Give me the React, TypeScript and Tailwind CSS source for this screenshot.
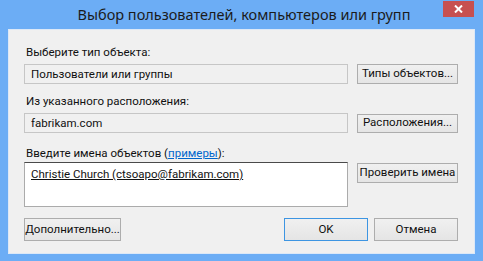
import React from "react";

const titleFont = { fontFamily: '"Noto Sans", "Open Sans", sans-serif' };
const bodyFont = { fontFamily: 'Roboto, "Noto Sans", sans-serif' };

function Btn({
  label,
  className = "",
  primary = false,
}: {
  label: string;
  className?: string;
  primary?: boolean;
}) {
  return (
    <button
      type="button"
      className={`flex items-center justify-center whitespace-nowrap border bg-gradient-to-b from-[#f0f0f0] to-[#e5e5e5] text-[11.5px] leading-none text-[#111] ${
        primary ? "border-[#3d95e2]" : "border-[#adadad]"
      } ${className}`}
    >
      {label}
    </button>
  );
}

function Field({ value }: { value: string }) {
  return (
    <div className="flex h-[20px] w-[324px] items-center whitespace-nowrap border border-[#c6c6c6] bg-[#f0f0f0] px-[6px] text-[11.5px] text-[#111]">
      {value}
    </div>
  );
}

export default function App() {
  return (
    <div style={bodyFont} className="flex h-[261px] w-[483px] flex-col bg-[#6cadf5]">
      <div
        style={titleFont}
        className="relative flex h-[29px] shrink-0 items-center justify-center whitespace-nowrap pl-[5px] text-[14.5px] text-[#1b1b1b]"
      >
        Выбор пользователей, компьютеров или групп
        <div className="absolute right-[9px] top-[1px] flex h-[16px] w-[31px] items-center justify-center bg-[#c75050]">
          <svg width="9" height="8" viewBox="0 0 9 8">
            <path d="M1 0.5 L8 7.5 M8 0.5 L1 7.5" stroke="#fff" strokeWidth="2" />
          </svg>
        </div>
      </div>

      <div className="mx-[8px] mb-[7px] flex flex-1 flex-col border border-[#dce8f7] bg-[#f0f0f0] pl-[15px] pr-[16px] text-[11.5px] leading-[16px] text-[#111]">
        <div className="mt-[14px] whitespace-nowrap pl-[2px]">Выберите тип объекта:</div>
        <div className="mt-[4px] flex items-center gap-[9px]">
          <Field value="Пользователи или группы" />
          <Btn label="Типы объектов..." className="h-[20px] w-[101px]" />
        </div>

        <div className="mt-[9px] whitespace-nowrap pl-[2px]">Из указанного расположения:</div>
        <div className="mt-[4px] flex items-center gap-[9px]">
          <Field value="fabrikam.com" />
          <Btn label="Расположения..." className="h-[19px] w-[101px]" />
        </div>

        <div className="mt-[12px] whitespace-nowrap pl-[2px]">
          Введите имена объектов (
          <span className="text-[#0066cc] underline">примеры</span>):
        </div>
        <div className="mt-[1px] flex items-start gap-[9px]">
          <div className="h-[45px] w-[324px] whitespace-nowrap border border-[#ababab] border-t-[#4a4a4a] bg-white px-[6px] pt-[3px]">
            <span className="underline">Christie Church (ctsoapo@fabrikam.com)</span>
          </div>
          <Btn label="Проверить имена" className="mt-[1px] h-[20px] w-[101px]" />
        </div>

        <div className="mt-[11px] flex items-center">
          <Btn label="Дополнительно..." className="h-[23px] w-[97px]" />
          <Btn label="OK" primary className="ml-auto h-[23px] w-[84px]" />
          <Btn label="Отмена" className="ml-[6px] h-[23px] w-[84px]" />
        </div>
      </div>
    </div>
  );
}
